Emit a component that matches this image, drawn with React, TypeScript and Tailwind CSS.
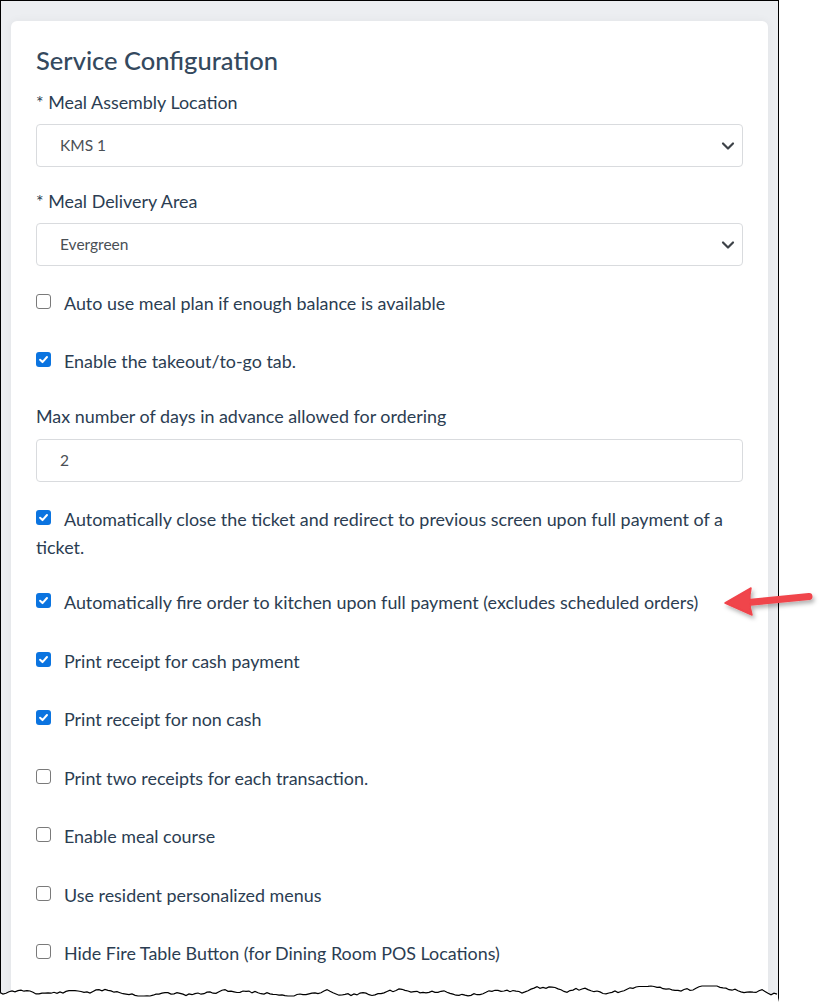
import React from "react";

const tear = (() => {
  let s = 11;
  const rnd = () => {
    s = (s * 9301 + 49297) % 233280;
    return s / 233280;
  };
  const pts: string[] = [];
  let y = 10;
  for (let x = 0; x <= 779; x += 3) {
    y += (rnd() - 0.5) * 3.6;
    if (y < 4) y = 4;
    if (y > 14) y = 14;
    pts.push(`${x},${y.toFixed(1)}`);
  }
  return pts;
})();

function Box({ checked }: { checked: boolean }) {
  return checked ? (
    <span className="mt-[5px] flex h-[15px] w-[15px] shrink-0 items-center justify-center rounded-[3px] bg-[#0b74e0]">
      <svg width="11" height="11" viewBox="0 0 12 12">
        <path d="M2.3 6.3 L4.9 8.8 L9.8 3.3" fill="none" stroke="#fff" strokeWidth="2.2" strokeLinecap="round" strokeLinejoin="round" />
      </svg>
    </span>
  ) : (
    <span className="mt-[5px] block h-[15px] w-[15px] shrink-0 rounded-[3px] border-[1.5px] border-[#7a7a7a] bg-white" />
  );
}

function Check({ checked, children }: { checked: boolean; children: React.ReactNode }) {
  return (
    <div className="flex items-start gap-[13px] leading-[28px]">
      <Box checked={checked} />
      <span>{children}</span>
    </div>
  );
}

function Select({ value }: { value: string }) {
  return (
    <div className="mt-[9px] flex h-[43px] items-center justify-between rounded-[4px] border border-[#d9dbde] bg-white pl-[23px] pr-[6px] text-[15.5px] text-[#4a4f55]">
      <span>{value}</span>
      <svg width="14" height="10" viewBox="0 0 14 10" className="mr-[1px]">
        <path d="M2 2.5 L7 7.5 L12 2.5" fill="none" stroke="#3d4248" strokeWidth="2.2" strokeLinecap="round" strokeLinejoin="round" />
      </svg>
    </div>
  );
}

export default function App() {
  return (
    <div className="relative h-[1002px] w-[835px] overflow-hidden bg-white" style={{ fontFamily: "Lato, 'Noto Sans', sans-serif" }}>
      <div className="h-[1002px] w-[779px] border-l border-r border-t border-black bg-[#eceef1] pl-[10px] pr-[10px] pt-[20px]">
        <div className="h-[1000px] rounded-[6px] bg-white px-[25px] pt-[24px] text-[17.9px] text-[#2b3d52] shadow-[0_0_10px_rgba(0,0,0,0.05)]">
          <h1 className="text-[25.5px] font-medium leading-[30px] text-[#34495e]">Service Configuration</h1>
          <div className="mt-[14px] leading-[26px]">* Meal Assembly Location</div>
          <Select value="KMS 1" />
          <div className="mt-[21px] leading-[26px]">* Meal Delivery Area</div>
          <Select value="Evergreen" />
          <div className="mt-[23px]">
            <Check checked={false}>Auto use meal plan if enough balance is available</Check>
          </div>
          <div className="mt-[30px]">
            <Check checked={true}>Enable the takeout/to-go tab.</Check>
          </div>
          <div className="mt-[27px] leading-[28px]">Max number of days in advance allowed for ordering</div>
          <div className="mt-[9px] flex h-[43px] items-center rounded-[4px] border border-[#d9dbde] bg-white pl-[23px] text-[15.5px] text-[#4a4f55]">2</div>
          <div className="mt-[23px] leading-[28px]">
            <span className="float-left mr-[13px]">
              <Box checked={true} />
            </span>
            Automatically close the ticket and redirect to previous screen upon full payment of a ticket.
          </div>
          <div className="mt-[27px] flex flex-col gap-[30.5px]">
            <Check checked={true}>Automatically fire order to kitchen upon full payment (excludes scheduled orders)</Check>
            <Check checked={true}>Print receipt for cash payment</Check>
            <Check checked={true}>Print receipt for non cash</Check>
            <Check checked={false}>Print two receipts for each transaction.</Check>
            <Check checked={false}>Enable meal course</Check>
            <Check checked={false}>Use resident personalized menus</Check>
            <Check checked={false}>Hide Fire Table Button (for Dining Room POS Locations)</Check>
          </div>
        </div>
      </div>

      <svg className="absolute left-[718px] top-[580px]" width="110" height="46" viewBox="0 0 110 46">
        <defs>
          <filter id="sh" x="-20%" y="-40%" width="140%" height="180%">
            <feDropShadow dx="2" dy="3" stdDeviation="2" floodColor="#000" floodOpacity="0.3" />
          </filter>
        </defs>
        <g filter="url(#sh)">
          <path d="M30 22.5 L91 16.5" stroke="#f0444b" strokeWidth="7" strokeLinecap="round" />
          <path d="M7 23 L33 8 Q30 22 34 35 Z" fill="#f0444b" stroke="#f0444b" strokeWidth="1.5" strokeLinejoin="round" />
        </g>
      </svg>

      <svg className="absolute left-0 top-[982px]" width="835" height="20" viewBox="0 0 835 20">
        <polygon points={`${tear.join(" ")} 779,20 0,20`} fill="#fff" />
        <polyline points={tear.join(" ")} fill="none" stroke="#000" strokeWidth="1.2" />
      </svg>
    </div>
  );
}
